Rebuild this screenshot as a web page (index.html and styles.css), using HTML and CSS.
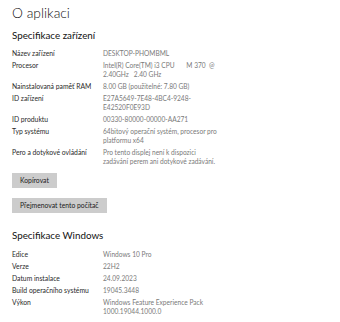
FILE: index.html
```html
<!DOCTYPE html>
<html lang="cs">
<head>
<meta charset="utf-8">
<link rel="stylesheet" href="styles.css">
</head>
<body>
<div class="page">
  <h1 class="title">O aplikaci</h1>
  <h2 class="section">Specifikace zařízení</h2>
  <div class="spec">
    <div class="label">Název zařízení</div>
    <div class="value">DESKTOP-PHOMBML</div>
    <div class="label">Procesor</div>
    <div class="value">Intel(R) Core(TM) i3 CPU       M 370  @<br>2.40GHz   2.40 GHz</div>
    <div class="label">Nainstalovaná paměť RAM</div>
    <div class="value">8.00 GB (použitelné: 7.80 GB)</div>
    <div class="label">ID zařízení</div>
    <div class="value">E27A5649-7E48-4BC4-9248-<br>E42520F0E93D</div>
    <div class="label">ID produktu</div>
    <div class="value">00330-80000-00000-AA271</div>
    <div class="label">Typ systému</div>
    <div class="value">64bitový operační systém, procesor pro<br>platformu x64</div>
    <div class="label">Pero a dotykové ovládání</div>
    <div class="value">Pro tento displej není k dispozici<br>zadávání perem ani dotykové zadávání.</div>
  </div>
  <div class="actions">
    <button class="btn">Kopírovat</button>
    <button class="btn">Přejmenovat tento počítač</button>
  </div>
  <h2 class="section section-win">Specifikace Windows</h2>
  <div class="spec">
    <div class="label">Edice</div>
    <div class="value">Windows 10 Pro</div>
    <div class="label">Verze</div>
    <div class="value">22H2</div>
    <div class="label">Datum instalace</div>
    <div class="value">24.09.2023</div>
    <div class="label">Build operačního systému</div>
    <div class="value">19045.3448</div>
    <div class="label">Výkon</div>
    <div class="value">Windows Feature Experience Pack<br>1000.19044.1000.0</div>
  </div>
</div>
</body>
</html>
```
FILE: styles.css
```css
html, body {
  margin: 0;
  padding: 0;
  background: #ffffff;
}
body {
  font-family: Lato, "Open Sans", "DejaVu Sans", sans-serif;
  color: #1a1a1a;
}
.page {
  padding: 4px 0 0 12px;
}
.title {
  margin: 0;
  font-size: 13.8px;
  line-height: 18px;
  font-weight: 300;
  color: #111;
}
.section {
  margin: 6px 0 0;
  font-size: 9.8px;
  line-height: 14px;
  font-weight: 400;
  color: #111;
}
.section-win {
  margin-top: 15px;
}
.spec {
  display: grid;
  grid-template-columns: 91px 140px;
  row-gap: 3px;
  margin-top: 6.5px;
  line-height: 9px;
}
.section-win + .spec {
  margin-top: 7.5px;
}
.label {
  font-size: 6.8px;
  color: #2a2a2a;
  white-space: nowrap;
}
.value {
  font-size: 6.6px;
  color: #7a7a7a;
  white-space: pre;
}
.actions {
  display: flex;
  flex-direction: column;
  align-items: flex-start;
  gap: 10px;
  margin-top: 7.5px;
}
.btn {
  font-family: inherit;
  font-size: 6.8px;
  line-height: 15px;
  height: 15px;
  padding: 0 8px;
  border: 0;
  background: #cccccc;
  color: #1a1a1a;
}
```
